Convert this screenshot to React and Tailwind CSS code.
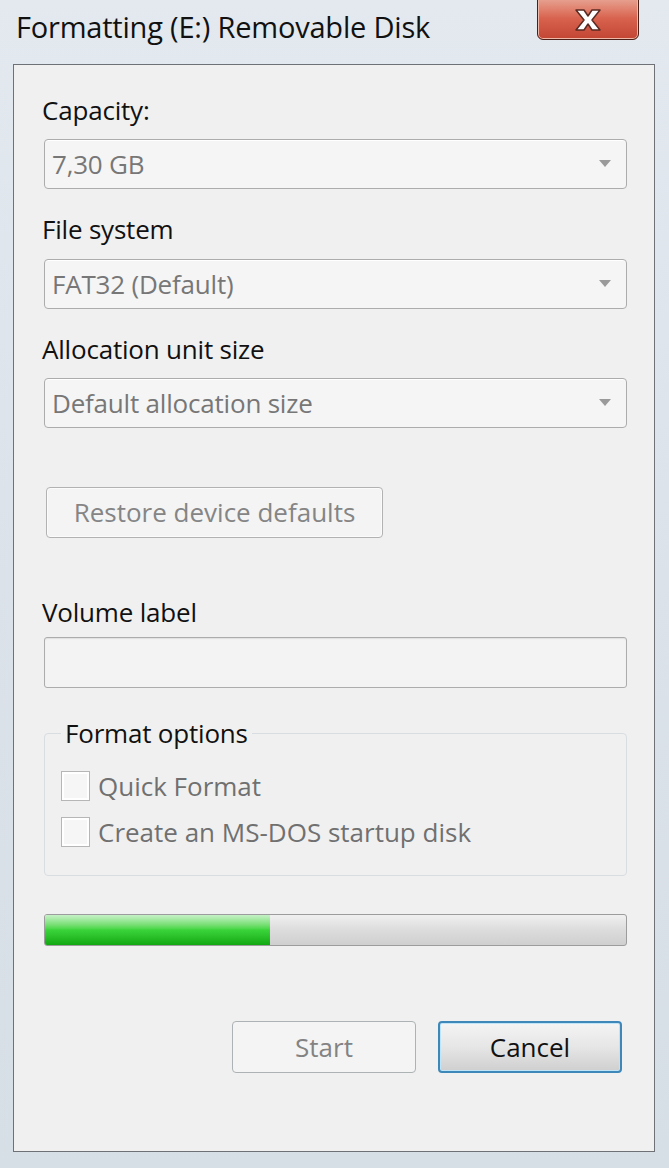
import React from 'react'

const font = "font-['Open_Sans','Noto_Sans',sans-serif]"

function Arrow() {
  return (
    <svg width="12" height="8" viewBox="0 0 12 8" className="shrink-0">
      <path d="M0 0 H12 L6 7 Z" fill="#9a9a9a" />
    </svg>
  )
}

function Select({ value }) {
  return (
    <div className="h-[50px] flex items-center justify-between pl-[7px] pr-[15px] border border-[#acacac] rounded-[4px] bg-[#f5f5f5] shadow-[inset_0_1px_0_#ffffff]">
      <span className="text-[26px] tracking-[-0.2px] text-[#777777]">{value}</span>
      <Arrow />
    </div>
  )
}

function Label({ children, className = '' }) {
  return <div className={`-ml-[2px] text-[26px] leading-[34px] tracking-[-0.2px] text-[#111111] ${className}`}>{children}</div>
}

function Check({ label, className = '' }) {
  return (
    <div className={`flex items-center gap-[8px] ${className}`}>
      <div className="w-[29px] h-[30px] border border-[#b6b6b6] bg-[#f6f6f6] shadow-[inset_0_0_0_2px_#ffffff]" />
      <span className="text-[26px] leading-[32px] text-[#707070]">{label}</span>
    </div>
  )
}

function CloseButton() {
  return (
    <div className="absolute top-[-4px] left-[537px] w-[102px] h-[44px] rounded-b-[6px] border border-[#4a2018] bg-gradient-to-b from-[#e8a898] via-[#d8634f] to-[#c24532] shadow-[inset_0_0_0_1px_#f0b8a8] flex items-center justify-center pt-[4px]">
      <svg width="30" height="24" viewBox="0 0 30 24">
        <path d="M3 2 H11 L15 8 L19 2 H27 L19 12 L27 22 H19 L15 16 L11 22 H3 L11 12 Z" fill="#ffffff" stroke="#5a2a22" strokeWidth="1.5" strokeLinejoin="round" />
      </svg>
    </div>
  )
}

export default function App() {
  return (
    <div className={`w-[669px] h-[1168px] relative overflow-hidden bg-gradient-to-b from-[#e3e9ef] via-[#dbe2ea] to-[#d6dee6] ${font}`}>
      <div className="h-[64px] flex items-center pl-[16px] pb-[10px]">
        <span className="text-[29px] tracking-[-0.2px] text-[#111111]">Formatting (E:) Removable Disk</span>
      </div>
      <CloseButton />

      <div className="ml-[13px] mr-[14px] h-[1088px] border border-[#6e7276] bg-[#f0f0f0] pl-[30px] pr-[27px] pt-[28px]">
        <Label>Capacity:</Label>
        <div className="mt-[12px]"><Select value="7,30 GB" /></div>

        <Label className="mt-[23px]">File system</Label>
        <div className="mt-[13px]"><Select value="FAT32 (Default)" /></div>

        <Label className="mt-[23px]">Allocation unit size</Label>
        <div className="mt-[12px]"><Select value="Default allocation size" /></div>

        <div className="mt-[59px] ml-[2px] w-[337px] h-[51px] flex items-center justify-center border border-[#b2b2b2] rounded-[4px] bg-[#f4f4f4] shadow-[inset_0_0_0_1px_#fbfbfb]">
          <span className="text-[26px] text-[#858585]">Restore device defaults</span>
        </div>

        <Label className="mt-[57px]">Volume label</Label>
        <div className="mt-[8px] h-[51px] border border-[#acacac] rounded-[3px] bg-[#f3f3f3] shadow-[inset_0_1px_1px_#e0e0e0]" />

        <fieldset className="mt-[30px] h-[158px] border border-[#d8dde2] rounded-[4px] pl-[16px] pr-[10px]">
          <legend className="px-[4px] text-[26px] leading-[30px] tracking-[-0.2px] text-[#111111]">Format options</legend>
          <Check className="mt-[22px]" label="Quick Format" />
          <Check className="mt-[14px]" label="Create an MS-DOS startup disk" />
        </fieldset>

        <div className="mt-[38px] h-[32px] border border-[#9c9c9c] rounded-[3px] bg-gradient-to-b from-[#f0f0f0] via-[#dcdcdc] to-[#cfcfcf] overflow-hidden flex">
          <div className="w-[38.8%] h-full bg-gradient-to-b from-[#c6f1c6] via-[#3ad43a] to-[#10a810]" />
        </div>

        <div className="mt-[75px] mr-[5px] flex justify-end gap-[22px]">
          <div className="w-[184px] h-[52px] flex items-center justify-center border border-[#adb2b5] rounded-[4px] bg-[#f4f4f4]">
            <span className="text-[26px] text-[#838383]">Start</span>
          </div>
          <div className="w-[184px] h-[52px] flex items-center justify-center border-2 border-[#3d88b8] rounded-[4px] bg-gradient-to-b from-[#f4f4f4] via-[#e6e6e6] to-[#cfcfcf] shadow-[inset_0_0_0_1px_#bfe3f7]">
            <span className="text-[26px] text-[#111111]">Cancel</span>
          </div>
        </div>
      </div>
    </div>
  )
}
